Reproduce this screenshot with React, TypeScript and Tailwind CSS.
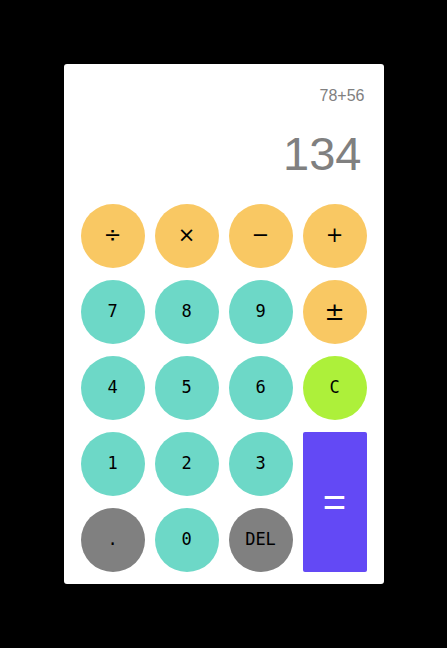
import React from "react";

const mono = { fontFamily: '"DejaVu Sans Mono", monospace' };
const sans = { fontFamily: '"DejaVu Sans", sans-serif' };

function Circle({ label, cls, size, op }: { label: string; cls: string; size: string; op?: boolean }) {
  return (
    <button
      className={`w-16 h-16 rounded-full flex items-center justify-center text-black ${cls} ${size}`}
      style={op ? sans : mono}
    >
      {label}
    </button>
  );
}

export default function App() {
  const orange = "bg-[#f9c863]";
  const teal = "bg-[#6dd8c7]";
  const grey = "bg-[#808080]";
  const d = "text-[17px]";
  const o = "text-[21px]";
  return (
    <div className="w-[447px] h-[648px] bg-black flex items-center justify-center">
      <div className="w-[320px] h-[520px] bg-white rounded-[3px] flex flex-col px-[17px] pb-[12px]">
        <div className="flex flex-col items-end pr-[2px]" style={{ fontFamily: '"Liberation Sans", Arial, sans-serif' }}>
          <div className="text-[#808080] text-[16px] leading-none mt-[24px]">78+56</div>
          <div className="text-[#808080] text-[47px] leading-none mt-[26px] pr-[3px]">134</div>
        </div>
        <div className="mt-auto grid grid-cols-4 gap-x-[10px] gap-y-[12px]">
          <Circle label="÷" cls={orange} size={o} op />
          <Circle label="×" cls={orange} size={o} op />
          <Circle label="−" cls={orange} size={o} op />
          <Circle label="+" cls={orange} size={o} op />
          <Circle label="7" cls={teal} size={d} />
          <Circle label="8" cls={teal} size={d} />
          <Circle label="9" cls={teal} size={d} />
          <Circle label="±" cls={orange} size="text-[24px]" op />
          <Circle label="4" cls={teal} size={d} />
          <Circle label="5" cls={teal} size={d} />
          <Circle label="6" cls={teal} size={d} />
          <Circle label="C" cls="bg-[#adf03a]" size={d} />
          <Circle label="1" cls={teal} size={d} />
          <Circle label="2" cls={teal} size={d} />
          <Circle label="3" cls={teal} size={d} />
          <button
            className="row-span-2 w-16 rounded-[2px] bg-[#6349f5] text-white flex items-center justify-center text-[40px]"
            style={{ fontFamily: '"Liberation Sans", Arial, sans-serif' }}
          >
            =
          </button>
          <Circle label="." cls={grey} size={d} />
          <Circle label="0" cls={teal} size={d} />
          <Circle label="DEL" cls={grey} size={d} />
        </div>
      </div>
    </div>
  );
}
